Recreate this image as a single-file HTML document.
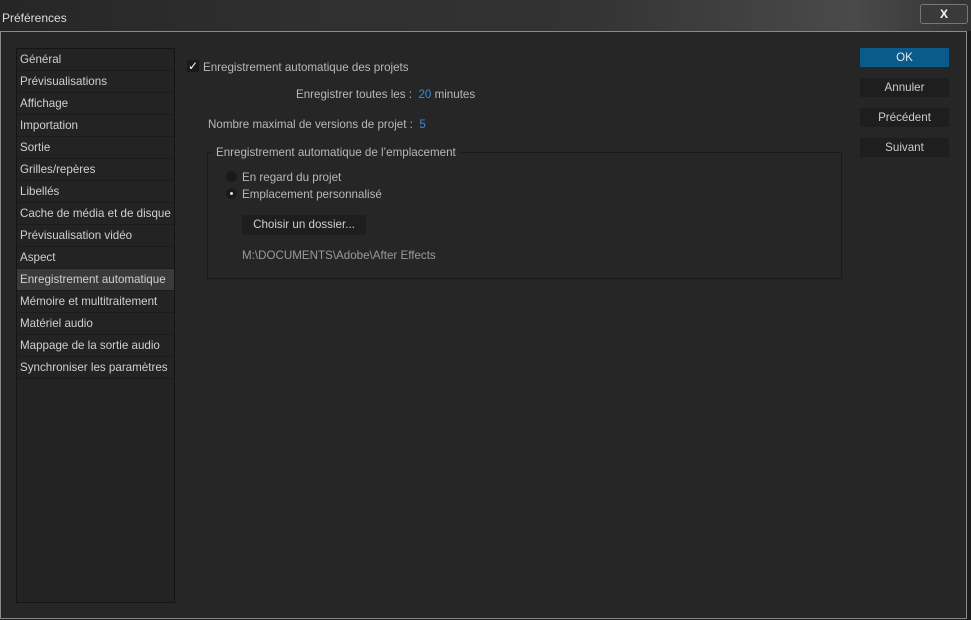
<!DOCTYPE html>
<html><head><meta charset="utf-8"><style>
body{margin:0;width:971px;height:620px;overflow:hidden;background:#1c1c1c;font-family:"Liberation Sans","DejaVu Sans",sans-serif;font-size:11.6px;color:#c8c8c8;position:relative}
.title{position:absolute;left:0;top:0;width:971px;height:31px;background:linear-gradient(90deg,#262626 0%,#2f2f2f 30%,#333 60%,#4a4a4a 88%,#333 100%)}
.title span{position:absolute;left:2px;top:11px;font-size:12px;color:#ddd}
.close{position:absolute;left:920px;top:4px;width:46px;height:18px;border:1px solid #777;border-radius:3px;background:#3a3a3a;color:#fff;font-weight:bold;text-align:center;line-height:18px;font-size:12px}
.dlg{position:absolute;left:0;top:31px;width:965px;height:586px;background:#262626;border:1px solid #8a8a8a}
.side{position:absolute;left:16px;top:48px;width:157px;height:553px;background:#232323;border:1px solid #151515}
.it{height:21px;border-bottom:1px solid #1c1c1c;padding-left:3px;line-height:22px;color:#d0d0d0}
.sel{background:#3a3a3a}
.btn{position:absolute;left:860px;width:89px;height:19px;background:#1e1e1e;text-align:center;line-height:20px;color:#ccc}
.ok{background:#0a5a8a;color:#e8e8e8}
.t{position:absolute;white-space:nowrap;color:#b8b8b8}
.b{color:#3a8ad0}
.grp{position:absolute;left:207px;top:152px;width:633px;height:125px;border:1px solid #1a1a1a}
.rad{position:absolute;width:11px;height:11px;border-radius:50%;background:#1a1a1a}
</style></head><body>
<div class="title"><span>Préférences</span><div class="close">X</div></div>
<div class="dlg"></div>
<div class="side">
<div class="it">Général</div><div class="it">Prévisualisations</div><div class="it">Affichage</div><div class="it">Importation</div><div class="it">Sortie</div><div class="it">Grilles/repères</div><div class="it">Libellés</div><div class="it">Cache de média et de disque</div><div class="it">Prévisualisation vidéo</div><div class="it">Aspect</div><div class="it sel">Enregistrement automatique</div><div class="it">Mémoire et multitraitement</div><div class="it">Matériel audio</div><div class="it">Mappage de la sortie audio</div><div class="it">Synchroniser les paramètres</div>
</div>
<div class="btn ok" style="top:48px">OK</div>
<div class="btn" style="top:78px">Annuler</div>
<div class="btn" style="top:108px">Précédent</div>
<div class="btn" style="top:138px">Suivant</div>
<div style="position:absolute;left:187px;top:60px;width:12px;height:12px;background:#1a1a1a;color:#fff;font-size:12px;line-height:12px;text-align:center">✓</div>
<div class="t" style="left:203px;top:61px">Enregistrement automatique des projets</div>
<div class="t" style="left:296px;top:88px">Enregistrer toutes les : &nbsp;<span class="b">20</span> minutes</div>
<div class="t" style="left:208px;top:118px">Nombre maximal de versions de projet : &nbsp;<span class="b">5</span></div>
<div class="grp"></div>
<div class="t" style="left:212px;top:146px;background:#262626;padding:0 4px">Enregistrement automatique de l’emplacement</div>
<div class="rad" style="left:226px;top:171px"></div>
<div class="t" style="left:242px;top:171px">En regard du projet</div>
<div class="rad" style="left:226px;top:188px"><div style="position:absolute;left:4px;top:4px;width:3px;height:3px;border-radius:50%;background:#ddd"></div></div>
<div class="t" style="left:242px;top:188px">Emplacement personnalisé</div>
<div style="position:absolute;left:242px;top:215px;width:124px;height:20px;background:#1e1e1e;color:#d0d0d0;text-align:center;line-height:20px">Choisir un dossier...</div>
<div class="t" style="left:242px;top:249px;color:#9a9a9a">M:\DOCUMENTS\Adobe\After Effects</div>
</body></html>
